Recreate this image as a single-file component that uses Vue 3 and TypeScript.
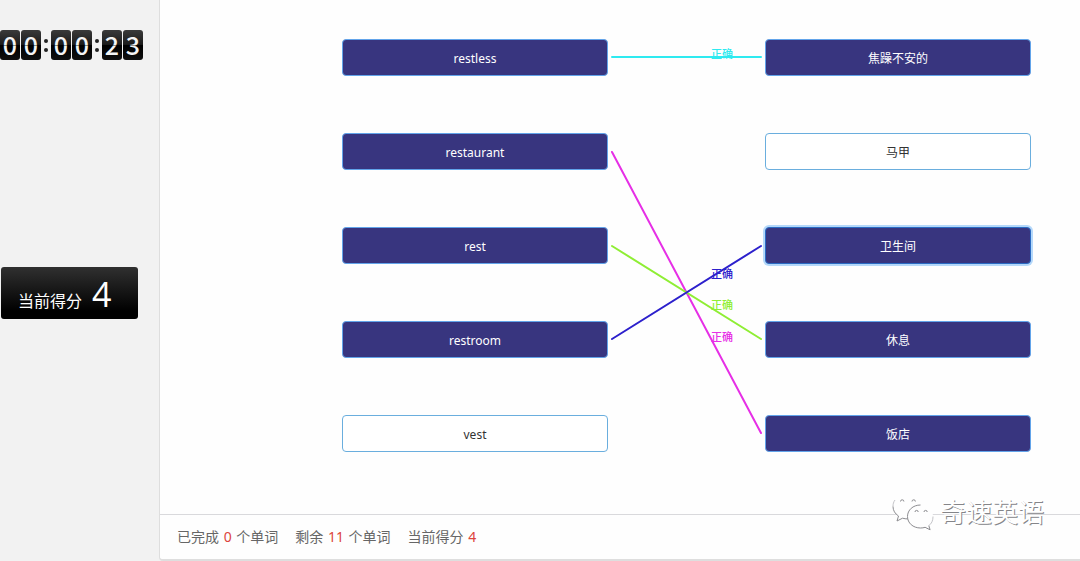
<script setup lang="ts">
import { ref } from 'vue'

interface Card { text: string; matched: boolean; active?: boolean }
interface Link { x1: number; y1: number; x2: number; y2: number; color: string; labelY: number }

const clock: string[] = ['0', '0', ':', '0', '0', ':', '2', '3']
const score = ref(4)
const done = ref(0)
const remaining = ref(11)

const words: Card[] = [
  { text: 'restless', matched: true },
  { text: 'restaurant', matched: true },
  { text: 'rest', matched: true },
  { text: 'restroom', matched: true },
  { text: 'vest', matched: false },
]
const meanings: Card[] = [
  { text: '焦躁不安的', matched: true },
  { text: '马甲', matched: false },
  { text: '卫生间', matched: true, active: true },
  { text: '休息', matched: true },
  { text: '饭店', matched: true },
]
const links: Link[] = [
  { x1: 4, y1: 18, x2: 153, y2: 18, color: '#2eeaf0', labelY: 19 },
  { x1: 4, y1: 113, x2: 153, y2: 394, color: '#e62fe6', labelY: 302 },
  { x1: 4, y1: 207, x2: 153, y2: 300, color: '#8fee34', labelY: 270 },
  { x1: 4, y1: 300, x2: 153, y2: 207, color: '#2c20cc', labelY: 239 },
]
</script>

<template>
  <div class="page">
    <aside class="side">
      <div class="clock" role="timer">
        <span v-for="(c, i) in clock" :key="i" :class="c === ':' ? 'colon' : 'digit'">
          <template v-if="c !== ':'">{{ c }}</template>
        </span>
      </div>
      <div class="score"><span>当前得分</span><strong>{{ score }}</strong></div>
    </aside>

    <main class="panel">
      <section class="board">
        <div class="column">
          <button v-for="w in words" :key="w.text" type="button" class="card" :class="{ matched: w.matched }">{{ w.text }}</button>
        </div>
        <svg class="links" width="157" height="413" viewBox="0 0 157 413">
          <g v-for="l in links" :key="l.color">
            <line :x1="l.x1" :y1="l.y1" :x2="l.x2" :y2="l.y2" :stroke="l.color" stroke-width="2" stroke-linecap="round" />
            <text x="103" :y="l.labelY" :fill="l.color">正确</text>
          </g>
        </svg>
        <div class="column">
          <button v-for="m in meanings" :key="m.text" type="button" class="card" :class="{ matched: m.matched, active: m.active }">{{ m.text }}</button>
        </div>
      </section>

      <footer class="status">
        <span>已完成 <b>{{ done }}</b> 个单词</span>
        <span>剩余 <b>{{ remaining }}</b> 个单词</span>
        <span>当前得分 <b>{{ score }}</b></span>
      </footer>
    </main>

    <div class="brand">
      <svg width="44" height="40" viewBox="0 0 44 40" aria-hidden="true">
        <path class="bubble" d="M17 2C8.500 2 2 7.500 2 14.500c0 4 2 7.200 5.500 9.500L6 29l5.500-2.800c1.800.5 3.500.7 5.500.7 8.500 0 15-5 15-12S25.500 2 17 2z" />
        <path class="rim soft" d="M4 8C2.500 10 2 12 2 14.500" />
        <path class="rim" d="M2 14.500c0 4 2 7.200 5.500 9.500L6 29l5.500-2.800c1.800.5 3.500.7 5.500.7" />
        <path class="bubble" d="M29.500 13c-7.500 0-13 5-13 11.500S22 36 29.500 36c1.600 0 3.200-.2 4.600-.7l5 2.500-1.300-4.200c3-2 4.200-5.200 4.200-9.100C42 18 37 13 29.500 13z" />
        <path class="rim" d="M29.500 13c-7.500 0-13 5-13 11.500S22 36 29.500 36c1.600 0 3.200-.2 4.600-.7l5 2.500-1.300-4.200" />
        <path class="rim soft" d="M37.800 33.600c3-2 4.200-5.200 4.200-9.100" />
        <path class="rim" d="M9.500 9.500a1.700 1.700 0 0 1 3.400 0M21 9.500a1.700 1.700 0 0 1 3.400 0M24 20a1.600 1.600 0 0 1 3.200 0M33 20a1.600 1.600 0 0 1 3.200 0" />
      </svg>
      <span>奇速英语</span>
    </div>
  </div>
</template>

<style>
body {
  background: #f2f2f2;
}
</style>

<style scoped>
.page {
  position: relative;
  display: flex;
  min-height: 100vh;
  box-sizing: border-box;
  padding-bottom: 1px;
  background: #f2f2f2;
  font-family: "Noto Sans", "Noto Sans CJK SC", sans-serif;
}
.side {
  flex: 0 0 159px;
  padding-top: 30px;
  box-sizing: border-box;
}
.clock {
  display: flex;
  gap: 1px;
}
.digit {
  position: relative;
  width: 20px;
  height: 30px;
  border-radius: 3px;
  background: linear-gradient(#3a3a3a, #1c1c1c 48%, #000 52%, #101010);
  color: #f4f4f4;
  font-family: "Noto Sans CJK SC", sans-serif;
  font-size: 25px;
  font-weight: 500;
  line-height: 29px;
  text-align: center;
}
.digit::after {
  content: "";
  position: absolute;
  inset: 15px 0 auto;
  height: 1px;
  background: rgba(0, 0, 0, 0.4);
}
.colon {
  display: flex;
  flex-direction: column;
  align-items: center;
  justify-content: center;
  gap: 5px;
  width: 8px;
}
.colon::before,
.colon::after {
  content: "";
  width: 4px;
  height: 4px;
  border-radius: 2px;
  background: #222;
}
.score {
  display: flex;
  align-items: baseline;
  gap: 10px;
  width: 137px;
  height: 52px;
  box-sizing: border-box;
  margin: 207px 0 0 1px;
  padding-left: 17px;
  border-radius: 3px;
  background: linear-gradient(#303030, #000 85%);
  color: #fff;
  font-size: 16px;
  line-height: 54px;
}
.score strong {
  font-family: "Open Sans", sans-serif;
  font-size: 34px;
  font-weight: 400;
}
.panel {
  flex: 1;
  display: flex;
  flex-direction: column;
  border: solid #dedede;
  border-width: 0 0 2px 1px;
  border-bottom-left-radius: 4px;
  background: #fefefe;
}
.board {
  flex: 1;
  display: grid;
  grid-template-columns: 1fr 157px 1fr;
  align-items: start;
  padding: 39px 49px 62px 182px;
}
.column {
  display: flex;
  flex-direction: column;
  gap: 57px;
}
.card {
  height: 37px;
  padding: 3px 0 0;
  border: 1px solid #6aaede;
  border-radius: 4px;
  background: #fff;
  color: #333;
  font-family: inherit;
  font-size: 12px;
  line-height: 20px;
}
.card.matched {
  background: #38357f;
  border-color: #62a4ea;
  color: #fff;
}
.card.matched.active {
  border-color: #2b6cc4;
  box-shadow: 0 0 0 2px #b4d8fa;
}
.links {
  display: block;
}
.links text {
  font-size: 11px;
  font-weight: 500;
}
.status {
  display: flex;
  gap: 17px;
  padding: 12px 17px;
  border-top: 1px solid #d9d9dc;
  color: #666;
  font-size: 14px;
  line-height: 20px;
}
.status b {
  margin: 0 1px;
  color: #dc443c;
  font-weight: 400;
}
.brand {
  position: absolute;
  right: 36px;
  bottom: 30px;
  display: flex;
  align-items: center;
  gap: 5px;
  color: #fff;
  font-size: 26px;
  line-height: 40px;
  text-shadow: 1px 1px 0 #858589;
}
.brand svg {
  display: block;
}
.bubble {
  fill: #fefefe;
}
.rim {
  fill: none;
  stroke: #8c8c90;
  stroke-width: 1;
}
.rim.soft {
  stroke: #c4c4c8;
}
</style>
